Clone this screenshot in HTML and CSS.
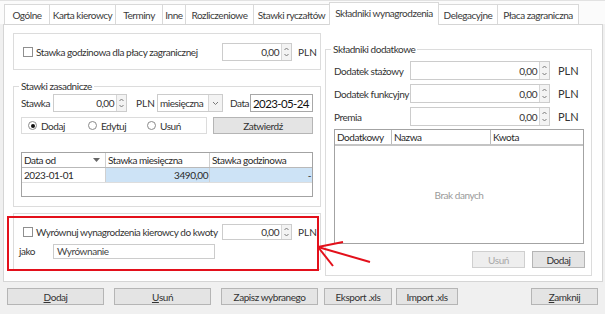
FILE: index.html
```html
<!DOCTYPE html>
<html lang="pl">
<head>
<meta charset="utf-8">
<link rel="stylesheet" href="styles.css">
</head>
<body>
<div class="window">
  <div class="tabs">
    <div class="tab t1">Ogólne</div>
    <div class="tab t2">Karta kierowcy</div>
    <div class="tab t3">Terminy</div>
    <div class="tab t4">Inne</div>
    <div class="tab t5">Rozliczeniowe</div>
    <div class="tab t6">Stawki ryczałtów</div>
    <div class="tab t7 active">Składniki wynagrodzenia</div>
    <div class="tab t8">Delegacyjne</div>
    <div class="tab t9">Płaca zagraniczna</div>
  </div>

  <div class="panel">
    <div class="col-left">
      <div class="box box1">
        <div class="chk"><span class="cb"></span><span>Stawka godzinowa dla płacy zagranicznej</span></div>
        <div class="num n70"><span class="val">0,00</span><span class="spin"><svg width="9" height="16" viewBox="0 0 9 16"><polyline points="2.5,6 4.5,4 6.5,6" /><polyline points="2.5,10 4.5,12 6.5,10" /></svg></span></div>
        <span class="unit">PLN</span>
      </div>

      <div class="box box2">
        <span class="legend">Stawki zasadnicze</span>
        <div class="row r1">
          <span class="lbl w32">Stawka</span>
          <div class="num n74"><span class="val">0,00</span><span class="spin"><svg width="9" height="16" viewBox="0 0 9 16"><polyline points="2.5,6 4.5,4 6.5,6" /><polyline points="2.5,10 4.5,12 6.5,10" /></svg></span></div>
          <span class="unit u2">PLN</span>
          <div class="combo"><span class="ctext">miesięczna</span><span class="cbtn"><svg width="9" height="8" viewBox="0 0 9 8"><polyline points="2,3 4.5,5.5 7,3" /></svg></span></div>
          <span class="lbl data">Data</span>
          <div class="date"><span class="dtext">2023-05-24</span><svg width="9" height="8" viewBox="0 0 9 8"><polyline points="2,3 4.5,5.5 7,3" /></svg></div>
        </div>
        <div class="row r2">
          <div class="radios">
            <span class="radio on"><span class="rb"></span>Dodaj</span>
            <span class="radio"><span class="rb"></span>Edytuj</span>
            <span class="radio"><span class="rb"></span>Usuń</span>
          </div>
          <div class="btn zat">Zatwierdź</div>
        </div>
        <div class="grid g1">
          <div class="gh">
            <span class="c c1">Data od<svg class="sort" width="7" height="5" viewBox="0 0 7 5"><polygon points="0,0 7,0 3.5,4" /></svg></span>
            <span class="c c2">Stawka miesięczna</span>
            <span class="c c3">Stawka godzinowa</span>
          </div>
          <div class="gr">
            <span class="c c1">2023-01-01</span>
            <span class="c c2 sel right">3490,00</span>
            <span class="c c3 sel right">-</span>
          </div>
          <div class="gr empty"></div>
        </div>
      </div>

      <div class="box box3">
        <div class="row b3r1">
          <div class="chk"><span class="cb"></span><span>Wyrównuj wynagrodzenia kierowcy do kwoty</span></div>
          <div class="num n70 h16"><span class="val">0,00</span><span class="spin"><svg width="9" height="14" viewBox="0 0 9 14"><polyline points="2.5,5 4.5,3 6.5,5" /><polyline points="2.5,9 4.5,11 6.5,9" /></svg></span></div>
          <span class="unit">PLN</span>
        </div>
        <div class="row b3r2">
          <span class="lbl jako">jako</span>
          <div class="text"><span>Wyrównanie</span></div>
        </div>
      </div>
    </div>

    <div class="col-right">
      <div class="box boxr">
        <span class="legend">Składniki dodatkowe</span>
        <div class="row rr">
          <span class="lbl w76">Dodatek stażowy</span>
          <div class="num n140"><span class="val">0,00</span><span class="spin"><svg width="9" height="17" viewBox="0 0 9 17"><polyline points="2.5,6 4.5,4 6.5,6" /><polyline points="2.5,11 4.5,13 6.5,11" /></svg></span></div>
          <span class="unit u3">PLN</span>
        </div>
        <div class="row rr">
          <span class="lbl w76">Dodatek funkcyjny</span>
          <div class="num n140"><span class="val">0,00</span><span class="spin"><svg width="9" height="17" viewBox="0 0 9 17"><polyline points="2.5,6 4.5,4 6.5,6" /><polyline points="2.5,11 4.5,13 6.5,11" /></svg></span></div>
          <span class="unit u3">PLN</span>
        </div>
        <div class="row rr">
          <span class="lbl w76">Premia</span>
          <div class="num n140"><span class="val">0,00</span><span class="spin"><svg width="9" height="17" viewBox="0 0 9 17"><polyline points="2.5,6 4.5,4 6.5,6" /><polyline points="2.5,11 4.5,13 6.5,11" /></svg></span></div>
          <span class="unit u3">PLN</span>
        </div>
        <div class="grid g2">
          <div class="gh gh2">
            <span class="c d1">Dodatkowy</span>
            <span class="c d2">Nazwa</span>
            <span class="c d3">Kwota</span>
          </div>
          <div class="nodata">Brak danych</div>
        </div>
        <div class="rbtns">
          <div class="btn small disabled">Usuń</div>
          <div class="btn small">Dodaj</div>
        </div>
      </div>
    </div>

    <div class="highlight"></div>
    <svg class="arrow" width="600" height="256" viewBox="0 0 600 256">
      <line x1="314" y1="222" x2="339" y2="217" />
      <line x1="314" y1="222" x2="366" y2="237" />
      <line x1="314" y1="222" x2="329" y2="241" />
    </svg>
  </div>

  <div class="bottom">
    <div class="btn bb b1"><u>D</u>odaj</div>
    <div class="btn bb b2"><u>U</u>suń</div>
    <div class="btn bb b3">Zapisz wybranego</div>
    <div class="btn bb b4">Eksport .xls</div>
    <div class="btn bb b5">Import .xls</div>
    <div class="btn bb b6"><u>Z</u>amknij</div>
  </div>
</div>
</body>
</html>
```

FILE: styles.css
```css
* { box-sizing: border-box; }
html, body { margin: 0; padding: 0; }
body {
  background: #f0f0f0;
  font-family: Lato, "Open Sans", "Liberation Sans", sans-serif;
  font-size: 10px;
  letter-spacing: -0.45px;
  color: #333;
  width: 605px;
  height: 314px;
  overflow: hidden;
}
.window { width: 605px; height: 314px; background: #f0f0f0; }

/* tabs */
.tabs {
  display: flex;
  align-items: flex-end;
  height: 24px;
  padding-left: 4px;
  background: #fbfbfb;
  border-top: 1px solid #e2e2e2;
}
.tab {
  height: 20px;
  border: 1px solid #d9d9d9;
  border-bottom: none;
  background: #fff;
  margin-left: -1px;
  display: flex;
  align-items: center;
  justify-content: center;
  color: #3a3a3a;
  white-space: nowrap;
}
.tab.t1 { margin-left: 0; width: 46px; }
.t2 { width: 67px; }
.t3 { width: 48px; }
.t4 { width: 24px; }
.t5 { width: 69px; }
.t6 { width: 77px; }
.t7 { width: 110px; }
.t8 { width: 60px; }
.t9 { width: 82px; }
.tab.active {
  height: 23px;
  margin-bottom: -1px;
  position: relative;
  z-index: 2;
  padding-bottom: 2px;
}

/* panel */
.panel {
  position: relative;
  margin-left: 3px;
  width: 600px;
  height: 258px;
  border: 1px solid #d5d5d5;
  background: #fff;
  display: flex;
  align-items: flex-start;
  padding: 8px 0 0 9px;
}
.col-left { width: 308px; }
.col-right { width: 267px; margin-left: 4px; }

.box {
  position: relative;
  border: 1px solid #dcdcdc;
  background: #fff;
}
.legend {
  position: absolute;
  top: -8px;
  left: 5px;
  padding: 0 2px;
  background: #fff;
  line-height: 14px;
  white-space: nowrap;
}
.row { display: flex; align-items: center; }
.lbl { white-space: nowrap; }

.box1 {
  height: 37px;
  display: flex;
  align-items: center;
  padding-left: 9px;
}
.chk { flex: 1; display: flex; align-items: center; white-space: nowrap; }
.cb {
  width: 10px; height: 10px;
  border: 1px solid #8f8f8f;
  background: #fff;
  margin-right: 3px;
  flex: none;
}
.num {
  display: flex;
  height: 18px;
  border: 1px solid #cccccc;
  background: #fff;
}
.num.h16 { height: 16px; }
.num .val {
  flex: 1;
  padding-right: 2px;
  display: flex;
  align-items: center;
  justify-content: flex-end;
  color: #333;
}
.spin {
  width: 10px;
  border-left: 1px solid #d6d6d6;
  background: #f3f3f3;
  display: flex;
  align-items: center;
  justify-content: center;
}
.spin svg polyline, .combo svg polyline, .date svg polyline {
  fill: none;
  stroke: #7a7a7a;
  stroke-width: 1;
}
.n70 { width: 70px; }
.n74 { width: 74px; }
.n140 { width: 140px; }
.unit { width: 22px; margin-left: 6px; white-space: nowrap; letter-spacing: 0; }

.box2 {
  margin-top: 16px;
  height: 121px;
  padding: 7px 6px 0 7px;
}
.r1 { height: 18px; }
.w32 { width: 32px; }
.u2 { margin-left: 9px; width: 21px; }
.combo {
  width: 66px;
  height: 18px;
  border: 1px solid #cccccc;
  display: flex;
  background: #fff;
}
.ctext { flex: 1; padding-left: 2px; display: flex; align-items: center; white-space: nowrap; }
.cbtn {
  width: 14px;
  border-left: 1px solid #d6d6d6;
  background: #f3f3f3;
  display: flex; align-items: center; justify-content: center;
}
.data { margin-left: 7px; width: 20px; }
.date {
  width: 63px;
  height: 18px;
  border: 1px solid #a8a8a8;
  display: flex;
  align-items: center;
  justify-content: space-between;
  padding: 0 1px 0 2px;
  background: #fff;
}
.dtext { font-size: 11.5px; color: #111; letter-spacing: -0.6px; white-space: nowrap; }

.r2 { margin-top: 5px; height: 17px; }
.radios {
  width: 186px;
  height: 17px;
  border: 1px solid #dcdcdc;
  display: flex;
  align-items: center;
  padding-left: 6px;
}
.radio { display: flex; align-items: center; }
.radios .radio:nth-child(1) { width: 60px; }
.radios .radio:nth-child(2) { width: 59px; }
.rb {
  width: 9px; height: 9px;
  border: 1px solid #8a8a8a;
  border-radius: 50%;
  margin-right: 4px;
  background: #fff;
  position: relative;
}
.radio.on .rb::after {
  content: "";
  position: absolute;
  left: 1.5px; top: 1.5px;
  width: 4px; height: 4px;
  border-radius: 50%;
  background: #111;
}
.btn {
  background: #e4e4e4;
  border: 1px solid #b5b5b5;
  display: flex;
  align-items: center;
  justify-content: center;
  color: #333;
  white-space: nowrap;
}
.zat { width: 100px; height: 17px; margin-left: 6px; }

.grid {
  border: 1px solid #a3a3a3;
  background: #fff;
}
.g1 { margin-top: 18px; width: 292px; height: 45px; }
.gh, .gr { display: flex; height: 15px; border-bottom: 1px solid #dddddd; }
.gh { border-bottom: 1px solid #b9b9b9; }
.gr.empty { border-bottom: none; }
.c {
  display: flex;
  align-items: center;
  padding-left: 2px;
  border-right: 1px solid #d0d0d0;
  white-space: nowrap;
  color: #2a2a2a;
}
.c1 { width: 84px; position: relative; }
.c2 { width: 104px; }
.c3 { flex: 1; border-right: none; }
.sort { position: absolute; right: 5px; top: 5px; fill: #666; }
.sel { background: #cde3f6; }
.right { justify-content: flex-end; padding-right: 1px; }

.box3 {
  margin-top: 6px;
  height: 57px;
  padding-left: 9px;
}
.b3r1 { margin-top: 10px; height: 16px; }
.b3r2 { margin-top: 4px; height: 14px; margin-left: -4px; }
.jako { width: 34px; }
.text {
  width: 162px;
  height: 15px;
  border: 1px solid #cccccc;
  display: flex;
  align-items: center;
  padding-left: 3px;
  color: #444;
}

/* right */
.boxr {
  margin-top: 16px;
  height: 227px;
  padding: 11px 6px 0 8px;
}
.rr { height: 19px; margin-bottom: 4px; }
.rr .num { height: 19px; }
.w76 { width: 76px; }
.u3 { margin-left: 8px; font-size: 11px; }
.g2 { margin-top: -1px; width: 250px; height: 115px; display: flex; flex-direction: column; }
.gh2 { height: 16px; flex: none; border-bottom: 2px solid #c4c4c4; }
.d1 { width: 57px; border-right: 1px solid #bbbbbb; }
.d2 { width: 99px; border-right: 1px solid #bbbbbb; }
.d3 { flex: 1; border-right: none; }
.nodata {
  flex: 1;
  display: flex;
  align-items: center;
  justify-content: center;
  color: #9a9a9a;
}
.rbtns { display: flex; justify-content: flex-end; margin-top: 7px; }
.btn.small { width: 53px; height: 17px; margin-left: 7px; }
.btn.disabled { color: #a8a8a8; border-color: #cfcfcf; background: #eeeeee; }

/* overlay annotation */
.highlight {
  position: absolute;
  left: 3px;
  top: 191px;
  width: 312px;
  height: 55px;
  border: 2px solid #e3101b;
  pointer-events: none;
}
.arrow {
  position: absolute;
  left: 0; top: 0;
  pointer-events: none;
  overflow: visible;
}
.arrow line { stroke: #e3101b; stroke-width: 2; }

/* bottom bar */
.bottom {
  display: flex;
  padding: 6px 0 0 7px;
}
.bb { height: 17px; }
.b1 { width: 97px; }
.b2 { width: 97px; margin-left: 10px; }
.b3 { width: 97px; margin-left: 10px; }
.b4 { width: 68px; margin-left: 6px; }
.b5 { width: 62px; margin-left: 4px; }
.b6 { width: 67px; margin-left: 73px; }
```
